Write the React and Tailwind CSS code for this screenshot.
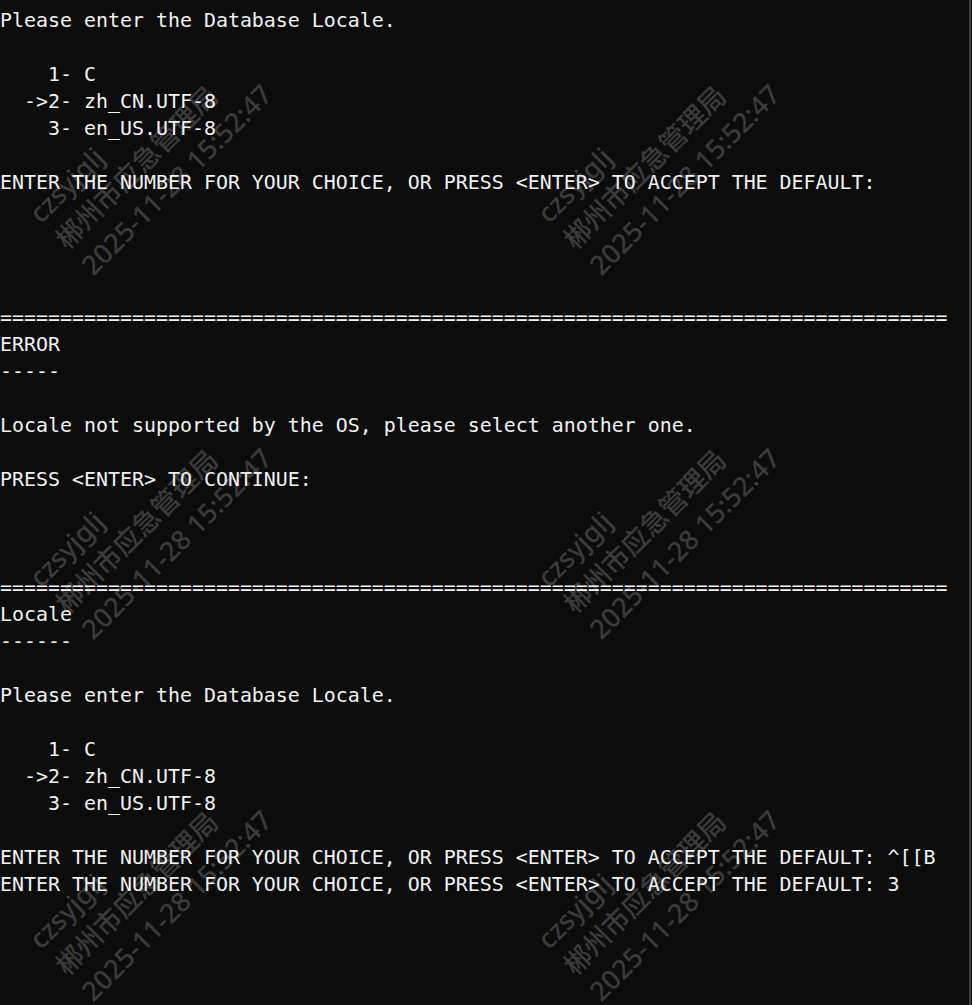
const rule = "=".repeat(79);

const lines = [
  "Please enter the Database Locale.",
  "",
  "    1- C",
  "  ->2- zh_CN.UTF-8",
  "    3- en_US.UTF-8",
  "",
  "ENTER THE NUMBER FOR YOUR CHOICE, OR PRESS <ENTER> TO ACCEPT THE DEFAULT:",
  "",
  "",
  "",
  "",
  rule,
  "ERROR",
  "-----",
  "",
  "Locale not supported by the OS, please select another one.",
  "",
  "PRESS <ENTER> TO CONTINUE:",
  "",
  "",
  "",
  rule,
  "Locale",
  "------",
  "",
  "Please enter the Database Locale.",
  "",
  "    1- C",
  "  ->2- zh_CN.UTF-8",
  "    3- en_US.UTF-8",
  "",
  "ENTER THE NUMBER FOR YOUR CHOICE, OR PRESS <ENTER> TO ACCEPT THE DEFAULT: ^[[B",
  "ENTER THE NUMBER FOR YOUR CHOICE, OR PRESS <ENTER> TO ACCEPT THE DEFAULT: 3",
];

// watermark stamp, repeated over the terminal
function Watermark({ className }) {
  return (
    <div
      className={`absolute -translate-x-1/2 -translate-y-1/2 -rotate-45 whitespace-pre text-left text-[27px] font-medium leading-[37px] text-[#3b3b3b] ${className}`}
      style={{ fontFamily: '"Noto Sans", "Noto Sans CJK SC", sans-serif' }}
    >
      <div>czsyjglj</div>
      <div>郴州市应急管理局</div>
      <div>2025-11-28 15:52:47</div>
    </div>
  );
}

export default function App() {
  return (
    <div className="relative flex h-[1005px] w-[972px] overflow-hidden bg-[#0c0c0c]">
      <div className="pointer-events-none absolute inset-0">
        <Watermark className="left-[150px] top-[153px]" />
        <Watermark className="left-[658px] top-[153px]" />
        <Watermark className="left-[150px] top-[517px]" />
        <Watermark className="left-[658px] top-[517px]" />
        <Watermark className="left-[150px] top-[879px]" />
        <Watermark className="left-[658px] top-[879px]" />
      </div>
      <pre
        className="relative flex-1 pt-[7px] text-[19.93px] leading-[27px] text-[#f2f2f2]"
        style={{ fontFamily: '"DejaVu Sans Mono", "Liberation Mono", monospace' }}
      >
        {lines.map((line, i) => (
          <div key={i} className="h-[27px]">
            {line}
          </div>
        ))}
      </pre>
      <div className="relative mr-px w-[2px] bg-[#3e3e3e]" />
    </div>
  );
}
